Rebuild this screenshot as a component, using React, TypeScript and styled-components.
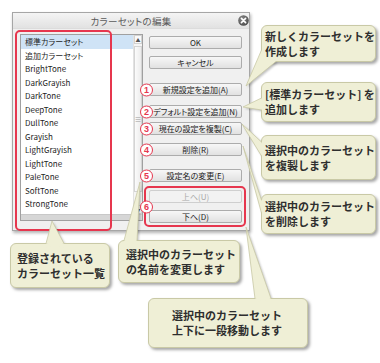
import React from 'react';
import styled, { createGlobalStyle } from 'styled-components';

const red = '#e6364e';
const calloutBg = '#efefd6';
const calloutEdge = '#c9c9a6';
const uiFont = `'Noto Sans CJK JP', 'DejaVu Sans', sans-serif`;

const GlobalStyle = createGlobalStyle`
  html, body { margin: 0; padding: 0; background: #fff; }
  * { box-sizing: border-box; }
`;

const Page = styled.div`
  position: relative;
  width: 380px;
  height: 363px;
  padding: 12px 0 0 12px;
  overflow: hidden;
  background: #fff;
`;

const Dialog = styled.div`
  width: 238px;
  height: 219px;
  border: 1px solid #a6a6a6;
  background: #f0f0f0;
  box-shadow: 1px 2px 3px rgba(0, 0, 0, 0.3);
  display: flex;
  flex-direction: column;
  font-family: ${uiFont};
  font-feature-settings: 'palt';
`;

const TitleBar = styled.div`
  height: 16px;
  display: grid;
  grid-template-columns: 1fr auto 1fr;
  align-items: center;
  background: linear-gradient(#f4f4f4, #e2e2e2);
  border-bottom: 1px solid #dcdcdc;
`;

const Title = styled.span`
  grid-column: 2;
  font-size: 9.5px;
  color: #5a5a5a;
  letter-spacing: 0.3px;
`;

const Close = styled.svg`
  grid-column: 3;
  justify-self: end;
  width: 11px;
  height: 11px;
`;

const Body = styled.div`
  flex: 1;
  display: flex;
  gap: 6px;
  padding: 5px 7px 0;
`;

const ListWrap = styled.div`
  position: relative;
`;

const ListBox = styled.div`
  width: 123px;
  height: 187px;
  border: 1px solid #a0a0a0;
  background: #fff;
  display: grid;
  grid-template-columns: 1fr 9px;
  grid-template-rows: 1fr 6px;
`;

const Items = styled.div`
  overflow: hidden;
`;

const Item = styled.div<{ $selected?: boolean }>`
  height: 13.5px;
  line-height: 13.5px;
  padding-left: 4px;
  font-size: 8px;
  color: #1e1e1e;
  white-space: nowrap;
  background: ${({ $selected }) => ($selected ? '#cfe3f6' : 'transparent')};
`;

const VScroll = styled.div`
  display: flex;
  flex-direction: column;
  background: #f5f5f5;
  border-left: 1px solid #e2e2e2;
`;

const Arrow = styled.div`
  height: 9px;
  display: flex;
  align-items: center;
  justify-content: center;
  border: 1px solid #d2d2d2;
  background: #f9f9f9;
  font-size: 5px;
  color: #555;
`;

const Thumb = styled.div`
  height: 146px;
  margin-top: 2px;
  border: 1px solid #d4d4d4;
  background: linear-gradient(90deg, #fbfbfb, #ececec);
  display: flex;
  align-items: center;
  justify-content: center;
  font-size: 7px;
  color: #9a9a9a;
`;

const Spacer = styled.div`
  flex: 1;
`;

const HScroll = styled.div`
  grid-column: 1 / -1;
  background: #d6d6d6;
  border-top: 1px solid #c8c8c8;
`;

const RedFrame = styled.div<{ $l: number; $t: number; $r: number; $b: number }>`
  position: absolute;
  left: ${({ $l }) => $l}px;
  top: ${({ $t }) => $t}px;
  right: ${({ $r }) => $r}px;
  bottom: ${({ $b }) => $b}px;
  border: 2px solid ${red};
  border-radius: 5px;
  pointer-events: none;
`;

const ButtonColumn = styled.div`
  width: 93px;
  display: flex;
  flex-direction: column;
`;

const Slot = styled.div<{ $mt: number }>`
  position: relative;
  margin-top: ${({ $mt }) => $mt}px;
`;

const Group = styled.div`
  position: relative;
  margin-top: 8px;
  display: flex;
  flex-direction: column;
  gap: 7px;
`;

const Button = styled.button<{ $off?: boolean }>`
  display: block;
  width: 100%;
  height: 13px;
  padding: 0;
  border: 1px solid ${({ $off }) => ($off ? '#cfcfcf' : '#acacac')};
  border-radius: 2px;
  background: ${({ $off }) => ($off ? '#f2f2f2' : 'linear-gradient(#f7f7f7, #e1e1e1)')};
  font-family: ${uiFont};
  font-feature-settings: 'palt';
  font-size: 8px;
  line-height: 11px;
  color: ${({ $off }) => ($off ? '#a8a8a8' : '#222')};
`;

const Badge = styled.span`
  position: absolute;
  left: -9px;
  top: 50%;
  transform: translateY(-50%);
  width: 13px;
  height: 13px;
  border: 1.5px solid ${red};
  border-radius: 50%;
  background: #fff;
  display: flex;
  align-items: center;
  justify-content: center;
  font-family: 'Liberation Sans', sans-serif;
  font-weight: 700;
  font-size: 9px;
  color: ${red};
  z-index: 1;
`;

const Layer = styled.svg`
  position: absolute;
  left: 0;
  top: 0;
  width: 380px;
  height: 363px;
  pointer-events: none;
`;

const Callout = styled.div<{ $x: number; $y: number; $w: number; $h: number; $pl: number }>`
  position: absolute;
  left: ${({ $x }) => $x}px;
  top: ${({ $y }) => $y}px;
  width: ${({ $w }) => $w}px;
  height: ${({ $h }) => $h}px;
  padding-left: ${({ $pl }) => $pl}px;
  display: flex;
  flex-direction: column;
  justify-content: center;
  background: ${calloutBg};
  border: 1px solid ${calloutEdge};
  border-radius: 6px;
  box-shadow: 2px 2px 3px rgba(0, 0, 0, 0.35);
  font-family: 'Noto Sans CJK JP', sans-serif;
  font-weight: 700;
  font-size: 11px;
  line-height: 15px;
  color: #2e2e2e;
  white-space: nowrap;
`;

// keeps the text above the tail layer that is drawn over the boxes
const Line = styled.span`
  position: relative;
  z-index: 2;
`;

const listItems = [
  '標準カラーセット', '追加カラーセット', 'BrightTone', 'DarkGrayish', 'DarkTone',
  'DeepTone', 'DullTone', 'Grayish', 'LightGrayish', 'LightTone', 'PaleTone',
  'SoftTone', 'StrongTone', 'VividTone',
];

const actions = [
  { label: '新規設定を追加(A)', badge: '1', mt: 14 },
  { label: 'デフォルト設定を追加(N)', badge: '2', mt: 9 },
  { label: '現在の設定を複製(C)', badge: '3', mt: 4 },
  { label: '削除(R)', badge: '4', mt: 8 },
  { label: '設定名の変更(E)', badge: '5', mt: 13 },
];

// tip, edge points on the box, and points inside the box that hide its border
const tails = [
  { tip: [246, 86], a: [261.5, 50], b: [276, 61.5], inner: [[268, 50], [276, 56]] },
  { tip: [243, 107], a: [261.5, 98], b: [261.5, 110], inner: [[266, 110], [266, 98]] },
  { tip: [242, 124], a: [261.5, 142], b: [261.5, 156], inner: [[266, 156], [266, 142]] },
  { tip: [243, 146], a: [261.5, 200], b: [261.5, 213], inner: [[266, 213], [266, 200]] },
  { tip: [52, 221], a: [46, 243.5], b: [64, 243.5], inner: [[64, 248], [46, 248]] },
  { tip: [140, 182], a: [124, 240.5], b: [137, 240.5], inner: [[137, 245], [124, 245]] },
  { tip: [246, 227], a: [255, 298.5], b: [271, 298.5], inner: [[271, 303], [255, 303]] },
];

const callouts = [
  { x: 261, y: 25, w: 115, h: 37, pl: 3, lines: ['新しくカラーセットを', '作成します'] },
  { x: 261, y: 82, w: 115, h: 40, pl: 3, lines: ['[標準カラーセット] を', '追加します'] },
  { x: 261, y: 135, w: 115, h: 45, pl: 3, lines: ['選択中のカラーセット', 'を複製します'] },
  { x: 261, y: 194, w: 115, h: 40, pl: 3, lines: ['選択中のカラーセット', 'を削除します'] },
  { x: 10, y: 243, w: 100, h: 45, pl: 6, lines: ['登録されている', 'カラーセット一覧'] },
  { x: 118, y: 240, w: 122, h: 43, pl: 7, lines: ['選択中のカラーセット', 'の名前を変更します'] },
  { x: 148, y: 298, w: 160, h: 50, pl: 23, lines: ['選択中のカラーセット', '上下に一段移動します'] },
];

const pts = (list: number[][]) => list.map(p => p.join(',')).join(' ');

const App: React.FC = () => {
  return (
    <Page>
      <GlobalStyle />
      <Dialog>
        <TitleBar>
          <Title>カラーセットの編集</Title>
          <Close viewBox="0 0 11 11">
            <defs>
              <radialGradient id="cl" cx="40%" cy="35%" r="70%">
                <stop offset="0" stopColor="#8a8a8a" />
                <stop offset="1" stopColor="#4a4a4a" />
              </radialGradient>
            </defs>
            <circle cx="5.5" cy="5.5" r="5.3" fill="url(#cl)" />
            <path d="M3.4 3.4 L7.6 7.6 M7.6 3.4 L3.4 7.6" stroke="#fff" strokeWidth="1.6" strokeLinecap="round" />
          </Close>
        </TitleBar>
        <Body>
          <ListWrap>
            <ListBox>
              <Items>
                {listItems.map((name, i) => (
                  <Item key={name} $selected={i === 0}>{name}</Item>
                ))}
              </Items>
              <VScroll>
                <Arrow>▲</Arrow>
                <Thumb>≡</Thumb>
                <Spacer />
                <Arrow>▼</Arrow>
              </VScroll>
              <HScroll />
            </ListBox>
            <RedFrame $l={-5} $t={-4} $r={31} $b={-1} />
          </ListWrap>
          <ButtonColumn>
            <Slot $mt={2}><Button>OK</Button></Slot>
            <Slot $mt={7}><Button>キャンセル</Button></Slot>
            {actions.map(a => (
              <Slot key={a.label} $mt={a.mt}>
                <Badge>{a.badge}</Badge>
                <Button>{a.label}</Button>
              </Slot>
            ))}
            <Group>
              <RedFrame $l={-5} $t={-4} $r={-4} $b={-4} />
              <Badge>6</Badge>
              <Button $off>上へ(U)</Button>
              <Button>下へ(D)</Button>
            </Group>
          </ButtonColumn>
        </Body>
      </Dialog>

      <Layer>
        <defs>
          <filter id="soft" x="-20%" y="-20%" width="140%" height="140%">
            <feGaussianBlur stdDeviation="1" />
          </filter>
        </defs>
        {tails.map((t, i) => (
          <polygon
            key={i}
            points={pts([t.tip, t.a, t.b])}
            transform="translate(1.5 1.5)"
            fill="rgba(0,0,0,0.25)"
            filter="url(#soft)"
          />
        ))}
      </Layer>

      {callouts.map((c, i) => (
        <Callout key={i} $x={c.x} $y={c.y} $w={c.w} $h={c.h} $pl={c.pl}>
          {c.lines.map(l => <Line key={l}>{l}</Line>)}
        </Callout>
      ))}

      <Layer>
        {tails.map((t, i) => (
          <g key={i}>
            <polygon points={pts([t.tip, t.a, ...t.inner, t.b])} fill={calloutBg} />
            <polyline points={pts([t.a, t.tip, t.b])} fill="none" stroke={calloutEdge} strokeWidth="0.8" />
          </g>
        ))}
      </Layer>
    </Page>
  );
};

export default App;
